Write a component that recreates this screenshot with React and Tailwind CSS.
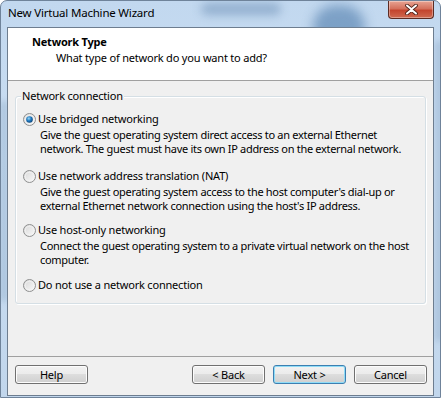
import React from "react";

const font = { fontFamily: '"Segoe UI", "Noto Sans", "Open Sans", sans-serif' };

function Radio({ checked }) {
  return (
    <svg width="13" height="13" viewBox="0 0 13 13" className="shrink-0">
      <defs>
        <linearGradient id="rg" x1="0" y1="0" x2="1" y2="1">
          <stop offset="0" stopColor="#d6d6d6" />
          <stop offset="1" stopColor="#fbfbfb" />
        </linearGradient>
        <radialGradient id="dot" cx="0.4" cy="0.35" r="0.7">
          <stop offset="0" stopColor="#9ad8f8" />
          <stop offset="0.5" stopColor="#1f7ac0" />
          <stop offset="1" stopColor="#0c3f73" />
        </radialGradient>
      </defs>
      <circle cx="6.5" cy="6.5" r="6" fill="url(#rg)" stroke="#8e8f8f" strokeWidth="1" />
      <circle cx="6.5" cy="6.5" r="4.3" fill="none" stroke="#f4f4f4" strokeWidth="0.8" />
      {checked && <circle cx="6.5" cy="6.5" r="3.3" fill="url(#dot)" />}
    </svg>
  );
}

function Option({ label, lines, checked, className = "" }) {
  return (
    <div className={"flex flex-col " + className}>
      <div className="flex items-center h-[14px]">
        <div className="ml-[7px] mr-[2px] flex"><Radio checked={checked} /></div>
        <span className="leading-[14px] whitespace-nowrap">{label}</span>
      </div>
      {lines && (
        <div className="ml-[24px] mt-[2px] leading-[13.5px] whitespace-nowrap tracking-[-0.3px]">
          {lines.map((l, i) => (
            <div key={i}>{l}</div>
          ))}
        </div>
      )}
    </div>
  );
}

function Btn({ children, def }) {
  return (
    <div
      className={
        "w-[73px] h-[19px] rounded-[3px] border flex items-center justify-center leading-none " +
        (def
          ? "border-[#3c7fb1] shadow-[inset_0_0_0_1px_#8fdcf7] bg-[linear-gradient(#f2f2f2_0%,#ebebeb_50%,#dddddd_50%,#cfcfcf_100%)]"
          : "border-[#707070] shadow-[inset_0_0_0_1px_#fcfcfc] bg-[linear-gradient(#f2f2f2_0%,#ebebeb_50%,#dddddd_50%,#cfcfcf_100%)]")
      }
    >
      {children}
    </div>
  );
}

export default function App() {
  return (
    <div
      style={font}
      className="relative w-[441px] h-[398px] overflow-hidden text-[11px] tracking-[-0.2px] text-black bg-[linear-gradient(180deg,#c2d8ef_0%,#cadef2_40%,#c1d6ec_100%)] border border-[#6f839a] rounded-t-[7px]"
    >
      {/* blurred background behind glass */}
      <div className="absolute left-[200px] top-[2px] w-[80px] h-[12px] rounded-full bg-[#7f9fc2] blur-[5px] opacity-70" />
      <div className="absolute left-[312px] top-[4px] w-[52px] h-[44px] rounded-full bg-[#5f89b5] blur-[6px] opacity-70" />
      <div className="absolute left-[434px] top-[40px] w-[8px] h-[300px] bg-[#9fb8d3] blur-[3px] opacity-70" />
      <div className="absolute left-0 top-[100px] w-[6px] h-[200px] bg-[#8eacc9] blur-[3px] opacity-60" />

      <div className="relative flex flex-col h-full">
        {/* title bar */}
        <div className="h-[26px] flex items-start">
          <div className="pl-[7px] pt-[4px] text-[11.5px] leading-[16px] whitespace-nowrap">New Virtual Machine Wizard</div>
          <div className="ml-auto mr-[6px] w-[46px] h-[18px] rounded-b-[4px] border border-t-0 border-[#5c2b22] bg-[linear-gradient(#e8a493_0%,#d4705c_45%,#c3452e_55%,#cf6a50_100%)] shadow-[inset_0_0_0_1px_rgba(255,255,255,0.35)] flex items-center justify-center">
            <svg width="13" height="11" viewBox="0 0 13 11">
              <path
                d="M2 1.5 L6.5 5.3 L11 1.5 M2 9.5 L6.5 5.7 L11 9.5"
                stroke="#4a2018"
                strokeWidth="3.6"
                fill="none"
                strokeLinecap="round"
              />
              <path
                d="M2 1.5 L6.5 5.3 L11 1.5 M2 9.5 L6.5 5.7 L11 9.5"
                stroke="#ffffff"
                strokeWidth="2"
                fill="none"
                strokeLinecap="round"
              />
            </svg>
          </div>
        </div>

        {/* client area */}
        <div className="mx-[6px] h-[369px] border border-[#6d7d8f] bg-[#f0f0f0] flex flex-col">
          {/* header */}
          <div className="h-[53px] bg-white border-b border-[#a0a0a0] pl-[24px] pt-[6px] whitespace-nowrap">
            <div className="font-bold leading-[16px]">Network Type</div>
            <div className="pl-[24px] leading-[16px]">What type of network do you want to add?</div>
          </div>

          {/* group box */}
          <div className="relative mx-[7px] mt-[15px] h-[208px] border border-[#d5dfe5] rounded-[3px] shadow-[inset_1px_1px_0_#ffffff,1px_1px_0_#ffffff]">
            <div className="absolute left-[5px] top-[-8px] bg-[#f0f0f0] px-[1px] leading-[14px] whitespace-nowrap">Network connection</div>
            <div className="pt-[15px] flex flex-col">
              <Option
                checked
                label="Use bridged networking"
                lines={[
                  "Give the guest operating system direct access to an external Ethernet",
                  "network. The guest must have its own IP address on the external network.",
                ]}
              />
              <Option
                className="mt-[14px]"
                label="Use network address translation (NAT)"
                lines={[
                  "Give the guest operating system access to the host computer's dial-up or",
                  "external Ethernet network connection using the host's IP address.",
                ]}
              />
              <Option
                className="mt-[11px]"
                label="Use host-only networking"
                lines={[
                  "Connect the guest operating system to a private virtual network on the host",
                  "computer.",
                ]}
              />
              <Option className="mt-[12px]" label="Do not use a network connection" />
            </div>
          </div>

          <div className="flex-1" />

          {/* footer */}
          <div className="h-[39px] border-t border-[#a0a0a0] flex items-start pt-[8px] pl-[7px] pr-[6px]">
            <Btn>Help</Btn>
            <div className="flex-1" />
            <div className="flex gap-[8px]">
              <Btn>&lt; Back</Btn>
              <Btn def>Next &gt;</Btn>
              <Btn>Cancel</Btn>
            </div>
          </div>
        </div>
      </div>
    </div>
  );
}
